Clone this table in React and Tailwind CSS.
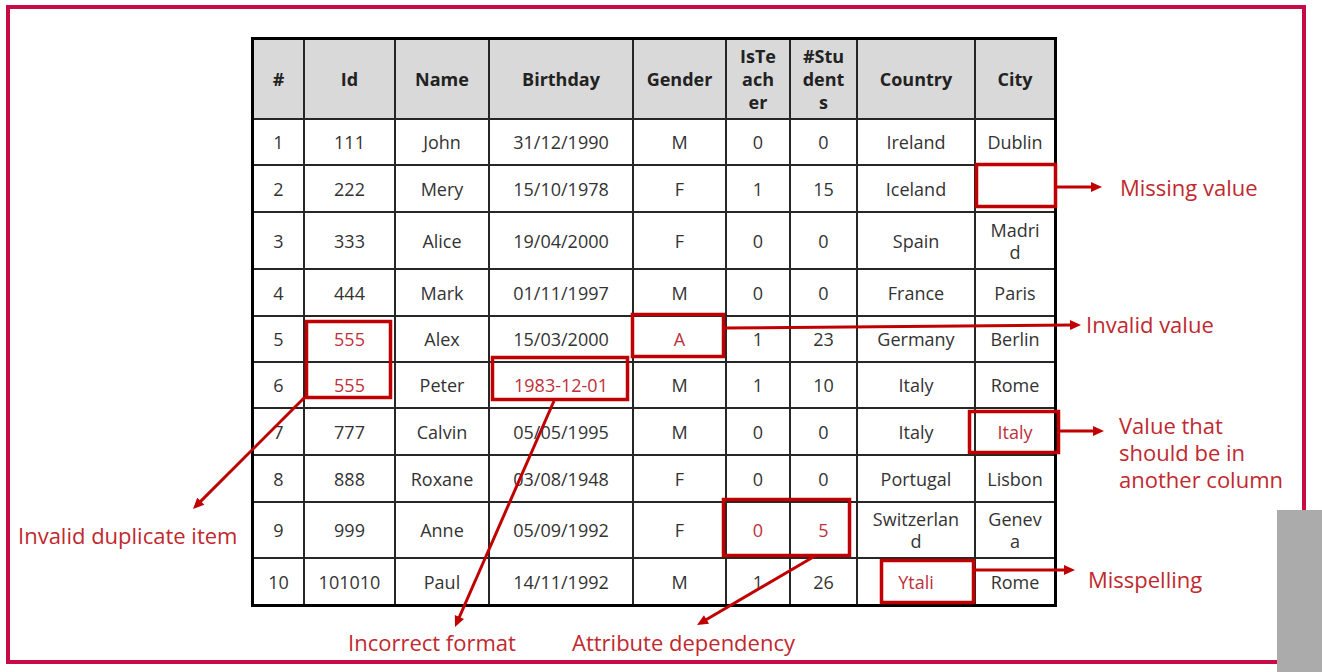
import React from "react";

const header = ["#", "Id", "Name", "Birthday", "Gender", "IsTe\nach\ner", "#Stu\ndent\ns", "Country", "City"];

const R = (t) => ({ t, r: true });

const rows = [
  ["1", "111", "John", "31/12/1990", "M", "0", "0", "Ireland", "Dublin"],
  ["2", "222", "Mery", "15/10/1978", "F", "1", "15", "Iceland", ""],
  ["3", "333", "Alice", "19/04/2000", "F", "0", "0", "Spain", "Madri\nd"],
  ["4", "444", "Mark", "01/11/1997", "M", "0", "0", "France", "Paris"],
  ["5", R("555"), "Alex", "15/03/2000", R("A"), "1", "23", "Germany", "Berlin"],
  ["6", R("555"), "Peter", R("1983-12-01"), "M", "1", "10", "Italy", "Rome"],
  ["7", "777", "Calvin", "05/05/1995", "M", "0", "0", "Italy", R("Italy")],
  ["8", "888", "Roxane", "03/08/1948", "F", "0", "0", "Portugal", "Lisbon"],
  ["9", "999", "Anne", "05/09/1992", "F", R("0"), R("5"), "Switzerlan\nd", "Genev\na"],
  ["10", "101010", "Paul", "14/11/1992", "M", "1", "26", R("Ytali"), "Rome"],
];

const RED = "#c00000";

function Arrow({ x1, y1, x2, y2 }) {
  const dx = x2 - x1;
  const dy = y2 - y1;
  const len = Math.hypot(dx, dy);
  const ux = dx / len;
  const uy = dy / len;
  const L = 11;
  const W = 5;
  const bx = x2 - ux * L;
  const by = y2 - uy * L;
  const px = -uy;
  const py = ux;
  const pts = `${x2},${y2} ${bx + px * W},${by + py * W} ${bx - px * W},${by - py * W}`;
  return (
    <g>
      <line x1={x1} y1={y1} x2={bx + ux * 2} y2={by + uy * 2} stroke={RED} strokeWidth="3" />
      <polygon points={pts} fill={RED} />
    </g>
  );
}

function Box({ x1, y1, x2, y2 }) {
  return <rect x={x1 + 1.5} y={y1 + 1.5} width={x2 - x1 - 3} height={y2 - y1 - 3} fill="none" stroke={RED} strokeWidth="3.5" />;
}

export default function App() {
  return (
    <div
      className="relative w-[1322px] h-[672px] bg-white overflow-hidden pt-[5px] pl-[6px]"
      style={{ fontFamily: '"Open Sans", "Liberation Sans", sans-serif' }}
    >
      <div className="w-[1300px] h-[659px] border-[4px] border-[#c80a46] pl-[241px] pt-[28px]">
        <div className="grid w-fit bg-[#262626] border-[3px] border-black gap-[2px] grid-cols-[49px_89px_92px_142px_91px_62px_65px_116px_78px] grid-rows-[78px_44px_45px_55px_45px_44px_44px_45px_45px_54px_45px]">
          {header.map((h, i) => (
            <div
              key={"h" + i}
              className="bg-[#d9d9d9] flex items-center justify-center text-center whitespace-pre-line font-bold text-[18px] leading-[23px] text-[#222]"
            >
              {h}
            </div>
          ))}
          {rows.map((row, ri) =>
            row.map((c, ci) => {
              const red = typeof c === "object";
              const t = red ? c.t : c;
              return (
                <div
                  key={ri + "-" + ci}
                  className={
                    "bg-white flex items-center justify-center text-center whitespace-pre-line text-[18px] leading-[22px] " +
                    (red ? "text-[#c0303a]" : "text-[#333333]")
                  }
                >
                  {t}
                </div>
              );
            })
          )}
        </div>
      </div>

      <svg className="absolute left-0 top-0 pointer-events-none" width="1322" height="672" viewBox="0 0 1322 672">
        <Box x1={975} y1={163} x2={1057} y2={208} />
        <Box x1={305} y1={320} x2={392} y2={399} />
        <Box x1={491} y1={356} x2={629} y2={401} />
        <Box x1={631} y1={313} x2={725} y2={358} />
        <Box x1={968} y1={410} x2={1060} y2={454} />
        <Box x1={722} y1={498} x2={851} y2={557} />
        <Box x1={880} y1={559} x2={975} y2={604} />

        <Arrow x1={1057} y1={187} x2={1102} y2={187} />
        <Arrow x1={725} y1={328} x2={1081} y2={325} />
        <Arrow x1={1060} y1={431} x2={1104} y2={431} />
        <Arrow x1={975} y1={570} x2={1075} y2={570} />
        <Arrow x1={305} y1={397} x2={193} y2={509} />
        <Arrow x1={554} y1={401} x2={455} y2={627} />
        <Arrow x1={815} y1={556} x2={697} y2={625} />
      </svg>

      <div className="absolute left-[1120px] top-[174px] text-[22px] leading-[27px] text-[#c0292f]">Missing value</div>
      <div className="absolute left-[1086px] top-[311px] text-[22px] leading-[27px] text-[#c0292f]">Invalid value</div>
      <div className="absolute left-[1119px] top-[412px] text-[22px] leading-[27px] text-[#c0292f]">
        Value that
        <br />
        should be in
        <br />
        another column
      </div>
      <div className="absolute left-[1088px] top-[566px] text-[22px] leading-[27px] text-[#c0292f]">Misspelling</div>
      <div className="absolute left-[18px] top-[522px] text-[22px] leading-[27px] text-[#c0292f] whitespace-nowrap">Invalid duplicate item</div>
      <div className="absolute left-[348px] top-[629px] text-[22px] leading-[27px] text-[#c0292f] whitespace-nowrap">Incorrect format</div>
      <div className="absolute left-[572px] top-[629px] text-[22px] leading-[27px] text-[#c0292f] whitespace-nowrap">Attribute dependency</div>

      <div className="absolute left-[1277px] top-[510px] w-[45px] h-[162px] bg-[#ababab]" />
    </div>
  );
}
